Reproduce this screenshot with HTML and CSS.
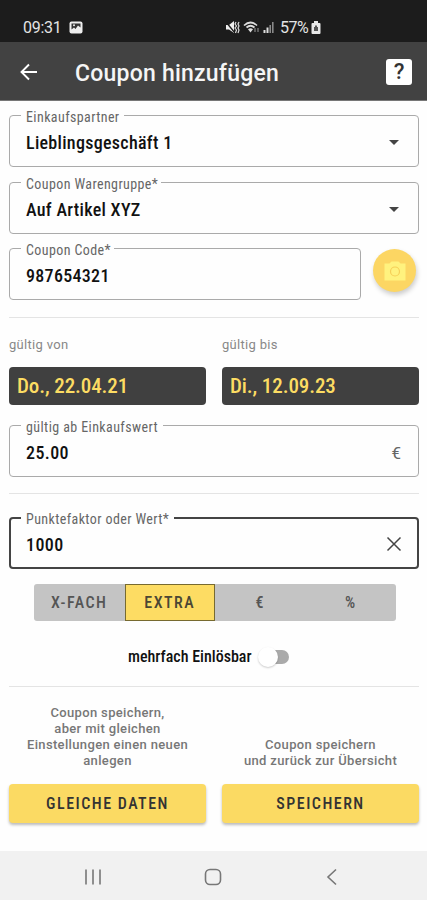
FILE: index.html
```
<!DOCTYPE html>
<html lang="de">
<head>
<meta charset="utf-8">
<title>Coupon hinzufügen</title>
<link rel="stylesheet" href="styles.css">
</head>
<body>
<div class="status">
  <span class="clock">09:31</span>
  <svg class="picture" width="14" height="13" viewBox="0 0 14 13"><rect x=".5" y=".5" width="13" height="12" rx="2" fill="#eee"/><path d="M2.500 2.500h9v4L9 4.500 6.500 8 5 6.500l-2.500 2z" fill="#333"/><circle cx="5" cy="4.300" r="1" fill="#eee"/></svg>
  <svg class="mute" width="15" height="13" viewBox="0 0 15 13"><path d="M1 4h3l5-4v12L4 8.500H1z" fill="#eee"/><path d="M1 1l9 11" stroke="#1c1c1c" stroke-width="1.300"/><path d="M11 1l-1 2 1.500 2-1.500 2 1.500 2-1 3M14 1l-1 2 1 2-1 2 1 2-1 3" fill="none" stroke="#ddd" stroke-width="1.200"/></svg>
  <svg class="wifi" width="17" height="13" viewBox="0 0 17 13"><path d="M1 4.500Q7.500-1.500 14 4.500M3.500 6.500Q7.500 3 11.500 6.500" fill="none" stroke="#ddd" stroke-width="1.700"/><path d="M5 8.200Q7.500 6.500 10 8.200L7.500 11.500z" fill="#ddd"/><path d="M12 7v4M15 7v4" stroke="#999"/></svg>
  <svg class="signal" width="11" height="12" viewBox="0 0 11 12"><path d="M1.500 12V9M4.500 12V6.500" stroke="#ddd" stroke-width="2"/><path d="M7.200 12V4M9.800 12V1" stroke="#888" stroke-width="1.600"/></svg>
  <span class="charge">57%</span>
  <svg class="battery" width="10" height="13" viewBox="0 0 10 13"><path d="M3 0h4v2h1.500q1 0 1 1v9q0 1-1 1h-7q-1 0-1-1V3q0-1 1-1H3z" fill="#e8e8e8"/><path d="M3 6h4v4H3zM4 6V4.500h2V6" fill="#555"/></svg>
</div>
<header class="bar">
  <svg class="back" width="18" height="18" viewBox="0 0 18 18"><path d="M17 9H2M9 1.500L1.500 9 9 16.500" fill="none" stroke="#fff" stroke-width="1.900"/></svg>
  <h1>Coupon hinzufügen</h1>
  <span class="help">?</span>
</header>
<main>
  <fieldset class="field"><legend class="w-partner">Einkaufspartner</legend><span class="value">Lieblingsgeschäft 1</span><i class="caret"></i></fieldset>
  <fieldset class="field"><legend class="w-group">Coupon Warengruppe*</legend><span class="value">Auf Artikel XYZ</span><i class="caret"></i></fieldset>
  <div class="code-row">
    <fieldset class="field"><legend class="w-code">Coupon Code*</legend><span class="value">987654321</span></fieldset>
    <button class="camera" aria-label="Kamera"><svg width="22" height="20" viewBox="0 0 22 20"><path d="M.5 2.500h5L7.500.5h7l2 2h5v17H.5z" fill="#fff27e"/><circle cx="11" cy="10.500" r="4.500" fill="none" stroke="#f6cf58" stroke-width="1.200"/></svg></button>
  </div>
  <hr>
  <div class="dates">
    <div><label>gültig von</label><div class="date">Do., 22.04.21</div></div>
    <div><label>gültig bis</label><div class="date">Di., 12.09.23</div></div>
  </div>
  <fieldset class="field amount"><legend class="w-min">gültig ab Einkaufswert</legend><span class="value">25.00</span><span class="euro">€</span></fieldset>
  <hr>
  <fieldset class="field focus"><legend class="w-factor">Punktefaktor oder Wert*</legend><span class="value">1000</span><svg class="clear" width="16" height="16" viewBox="0 0 16 16"><path d="M1.500 1.500l13 13M14.500 1.500l-13 13" stroke="#444" stroke-width="1.500"/></svg></fieldset>
  <div class="segments"><span>X-FACH</span><span class="on">EXTRA</span><span>€</span><span>%</span></div>
  <div class="multi"><span class="multi-label">mehrfach Einlösbar</span><span class="toggle"><i></i></span></div>
  <hr>
  <div class="actions">
    <div><p>Coupon speichern,<br>aber mit gleichen<br>Einstellungen einen neuen<br>anlegen</p><button>GLEICHE DATEN</button></div>
    <div><p>Coupon speichern<br>und zurück zur Übersicht</p><button>SPEICHERN</button></div>
  </div>
</main>
<nav>
  <svg width="18" height="18" viewBox="0 0 18 18"><path d="M2 1.500v15M9 1.500v15M16 1.500v15" stroke="#777" stroke-width="1.600"/></svg>
  <svg width="18" height="18" viewBox="0 0 18 18"><rect x="1.500" y="1.500" width="15" height="15" rx="4.500" fill="none" stroke="#777" stroke-width="1.600"/></svg>
  <svg width="18" height="18" viewBox="0 0 18 18"><path d="M13 1.500L5 9l8 7.500" fill="none" stroke="#777" stroke-width="1.600"/></svg>
</nav>
</body>
</html>
```
FILE: styles.css
```
* { box-sizing: border-box; }
body { margin: 0; width: 427px; height: 900px; display: flex; flex-direction: column; overflow: hidden; background: #fefefe; font-family: "Roboto Condensed", Roboto, sans-serif; font-stretch: 75%; color: #111; }
svg { display: block; flex: none; }
.status { height: 42px; flex: none; background: #1c1c1c; color: #e4e4e4; display: flex; align-items: center; padding: 12px 0 0 23px; font: 400 16px Roboto, sans-serif; }
.clock { width: 39px; letter-spacing: -.3px; }
.picture { margin-left: 7px; }
.mute { margin-left: 142px; }
.wifi { margin-left: 3px; }
.signal { margin-left: 3px; }
.charge { width: 29px; margin-left: 6px; font-size: 16px; letter-spacing: -.5px; }
.battery { margin-left: 2px; }
.bar { height: 59px; flex: none; background: #424242; border-bottom: 1px solid #777; display: flex; align-items: center; padding: 2px 15px 0 20px; color: #fff; }
h1 { margin: 2px 0 0 37px; flex: 1; font: 500 23px Roboto, sans-serif; letter-spacing: .22px; color: #f5f5f5; white-space: nowrap; }
.help { width: 26px; height: 26px; border-radius: 3px; background: #fff; color: #333; font: 500 22px/26px Roboto, sans-serif; text-align: center; }
main { height: 750px; flex: none; padding: 6px 8px 0 9px; display: flex; flex-direction: column; }
.field { margin: 0 0 6.500px; height: 60px; min-width: 0; flex: none; border: 1px solid #aaa; border-radius: 4px; padding: 0 17px 0 16px; display: flex; justify-content: space-between; align-items: flex-start; }
legend { height: 17px; margin-left: -5px; padding: 4px 0 0 5px; font-size: 14px; line-height: 13px; letter-spacing: .4px; color: #666; white-space: nowrap; }
.w-partner { width: 103px; }
.w-group { width: 140px; }
.w-code { width: 93px; }
.w-min { width: 142px; }
.w-factor { width: 153px; }
.value { margin-top: 8px; font-size: 18px; font-weight: 500; line-height: 22px; letter-spacing: .3px; white-space: nowrap; }
.caret { margin-top: 16px; margin-right: 2px; border: 5px solid transparent; border-top-color: #444; border-bottom: 0; }
.code-row { display: flex; align-items: flex-start; gap: 12px; }
.code-row .field { width: 352px; }
button { border: 0; padding: 0; font-family: inherit; font-stretch: inherit; }
.camera { width: 43px; height: 43px; margin-top: 9px; border-radius: 50%; background: #fcd663; box-shadow: 1px 3px 5px #0003; display: grid; place-items: center; }
hr { width: 100%; height: 1px; flex: none; border: 0; margin: 10px 0 0; background: #e4e4e4; }
.dates { display: grid; grid-template-columns: 197px 197px; gap: 16px; margin-top: 19px; }
.dates label { display: block; height: 30px; font: 400 13px/16px Roboto, sans-serif; letter-spacing: .3px; color: #888; }
.date { height: 38px; border-radius: 4px; background: #404040; color: #fcdc63; padding-left: 8px; font-size: 21px; font-weight: 500; line-height: 39px; letter-spacing: -.1px; }
.amount { margin-top: 12px; }
.amount .value, .focus .value { letter-spacing: .4px; }
.euro { margin-top: 8px; font: 400 17px/22px Roboto, sans-serif; color: #666; }
.focus { margin-top: 15px; border: 2px solid #444; padding-left: 15px; }
.clear { margin-top: 10px; margin-right: -2px; }
.segments { width: 362px; height: 37px; flex: none; margin: 8px 0 0 25px; display: grid; grid-template-columns: repeat(4, 1fr); background: #c4c4c4; border-radius: 3px; overflow: hidden; text-align: center; font-size: 16px; font-weight: 500; line-height: 38px; letter-spacing: 1.500px; color: #555; }
.segments .on { height: 37px; background: #fddc63; border: 1px solid #776a30; line-height: 36px; color: #4b4734; }
.multi { height: 30px; margin: 21px 0 0 119px; display: flex; align-items: center; }
.multi-label { width: 129px; font-size: 16px; font-weight: 500; letter-spacing: 0; white-space: nowrap; }
.toggle { width: 30px; height: 14px; border-radius: 7px; margin-left: 2px; background: #aaa; }
.toggle i { display: block; width: 20px; height: 20px; margin: -3px 0 0 -1px; border-radius: 50%; background: #fff; box-shadow: 0 1px 2px #0003; }
.multi + hr { margin-top: 14px; }
.actions { display: grid; grid-template-columns: 197px 197px; gap: 16px; height: 136px; align-items: end; }
.actions p { margin: 0 0 15px; text-align: center; font: 500 13px/16px Roboto, sans-serif; letter-spacing: .35px; color: #777; }
.actions button { display: block; width: 100%; height: 39px; border-radius: 4px; background: #fbda63; box-shadow: 0 2px 3px #0004; font-size: 16px; font-weight: 500; letter-spacing: 1.500px; color: #333; }
nav { height: 49px; flex: none; background: #f1f1f1; display: flex; justify-content: space-between; align-items: center; padding: 2px 86px 0 84px; }
```
